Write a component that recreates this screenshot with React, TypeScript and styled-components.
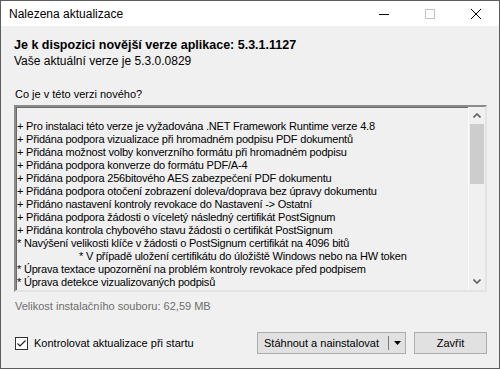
import React from "react";
import styled, { createGlobalStyle } from "styled-components";

const Global = createGlobalStyle`
  html, body {
    margin: 0;
    padding: 0;
    background: #f0f0f0;
  }
  * {
    box-sizing: border-box;
  }
`;

const Window = styled.div`
  width: 500px;
  height: 369px;
  border: 1px solid #5c5c5c;
  background: #f0f0f0;
  display: flex;
  flex-direction: column;
  font-family: "Liberation Sans", Arial, sans-serif;
  font-size: 11px;
  color: #000;
  overflow: hidden;
`;

const TitleBar = styled.div`
  height: 25px;
  background: #fff;
  display: flex;
  align-items: center;
  padding-left: 8px;
  flex-shrink: 0;
`;

const TitleText = styled.div`
  flex: 1;
  font-size: 12px;
  padding-top: 1px;
`;

const Controls = styled.div`
  display: flex;
  height: 100%;
`;

const ControlButton = styled.div`
  width: 46px;
  height: 100%;
  display: flex;
  align-items: center;
  justify-content: center;
`;

const Body = styled.div`
  flex: 1;
  display: flex;
  flex-direction: column;
  padding: 0 12px 0 13px;
`;

const Heading = styled.div`
  font-weight: bold;
  font-size: 12.5px;
  line-height: 15px;
  margin-top: 12px;
`;

const Current = styled.div`
  line-height: 15px;
  margin-top: 1px;
  font-size: 12px;
`;

const SectionLabel = styled.div`
  margin-top: 19px;
  line-height: 13px;
  padding-left: 1px;
`;

const TextBox = styled.div`
  margin-top: 4px;
  height: 187px;
  flex-shrink: 0;
  border-style: solid;
  border-width: 2px;
  border-color: #8a8a8a #e3e3e3 #e3e3e3 #8a8a8a;
  box-shadow: inset 1px 1px 0 #696969;
  display: flex;
  background: #f0f0f0;
`;

const Lines = styled.div`
  flex: 1;
  padding: 0 0 0 1px;
  line-height: 13px;
  letter-spacing: -0.2px;
  white-space: pre;
  overflow: hidden;
`;

const Line = styled.div<{ $indent?: number }>`
  height: 13px;
  padding-left: ${(p) => p.$indent || 0}px;
`;

const ScrollBar = styled.div`
  width: 17px;
  border-left: 1px solid #fbfbfb;
  display: flex;
  flex-direction: column;
  background: #f0f0f0;
`;

const Arrow = styled.div`
  height: 17px;
  display: flex;
  align-items: center;
  justify-content: center;
`;

const Track = styled.div`
  flex: 1;
  display: flex;
  flex-direction: column;
`;

const Thumb = styled.div`
  margin: 0 1px;
  height: 60px;
  background: #cdcdcd;
`;

const SizeInfo = styled.div`
  color: #6d6d6d;
  margin-top: 8px;
  line-height: 13px;
  padding-left: 1px;
`;

const Footer = styled.div`
  display: flex;
  align-items: center;
  margin-top: 19px;
`;

const CheckRow = styled.label`
  display: flex;
  align-items: center;
  gap: 6px;
  flex: 1;
  padding-left: 1px;
`;

const CheckBox = styled.span`
  width: 13px;
  height: 13px;
  border: 1px solid #333;
  background: #fff;
  display: flex;
  align-items: center;
  justify-content: center;
`;

const Button = styled.div<{ $width: number }>`
  width: ${(p) => p.$width}px;
  height: 22px;
  background: #e1e1e1;
  border: 1px solid #adadad;
  display: flex;
  align-items: center;
  justify-content: center;
`;

const SplitButton = styled(Button)`
  justify-content: flex-start;
  margin-right: 8px;
`;

const SplitLabel = styled.span`
  padding-left: 6px;
  width: 130px;
`;

const SplitDivider = styled.span`
  width: 1px;
  height: 14px;
  background: #7a7a7a;
`;

const SplitArrow = styled.span`
  flex: 1;
  display: flex;
  justify-content: center;
`;

const notes: { text: string; indent?: number }[] = [
  { text: "" },
  { text: "+ Pro instalaci této verze je vyžadována .NET Framework Runtime verze 4.8" },
  { text: "+ Přidána podpora vizualizace při hromadném podpisu PDF dokumentů" },
  { text: "+ Přidána možnost volby konverzního formátu při hromadném podpisu" },
  { text: "+ Přidána podpora konverze do formátu PDF/A-4" },
  { text: "+ Přidána podpora 256bitového AES zabezpečení PDF dokumentu" },
  { text: "+ Přidána podpora otočení zobrazení doleva/doprava bez úpravy dokumentu" },
  { text: "+ Přidáno nastavení kontroly revokace do Nastavení -> Ostatní" },
  { text: "+ Přidána podpora žádosti o víceletý následný certifikát PostSignum" },
  { text: "+ Přidána kontrola chybového stavu žádosti o certifikát PostSignum" },
  { text: "* Navýšení velikosti klíče v žádosti o PostSignum certifikát na 4096 bitů" },
  { text: "* V případě uložení certifikátu do úložiště Windows nebo na HW token", indent: 62 },
  { text: "* Úprava textace upozornění na problém kontroly revokace před podpisem" },
  { text: "* Úprava detekce vizualizovaných podpisů" },
];

export default function App() {
  return (
    <>
      <Global />
      <Window>
        <TitleBar>
          <TitleText>Nalezena aktualizace</TitleText>
          <Controls>
            <ControlButton>
              <svg width="10" height="10" viewBox="0 0 10 10">
                <path d="M0 5.5h10" stroke="#000" strokeWidth="1" />
              </svg>
            </ControlButton>
            <ControlButton>
              <svg width="10" height="10" viewBox="0 0 10 10">
                <rect x="0.5" y="0.5" width="9" height="9" fill="none" stroke="#c4c4c4" />
              </svg>
            </ControlButton>
            <ControlButton>
              <svg width="10" height="10" viewBox="0 0 10 10">
                <path d="M0 0L10 10M10 0L0 10" stroke="#000" strokeWidth="1" />
              </svg>
            </ControlButton>
          </Controls>
        </TitleBar>
        <Body>
          <Heading>Je k dispozici novější verze aplikace: 5.3.1.1127</Heading>
          <Current>Vaše aktuální verze je 5.3.0.0829</Current>
          <SectionLabel>Co je v této verzi nového?</SectionLabel>
          <TextBox>
            <Lines>
              {notes.map((n, i) => (
                <Line key={i} $indent={n.indent}>
                  {n.text}
                </Line>
              ))}
            </Lines>
            <ScrollBar>
              <Arrow>
                <svg width="8" height="5" viewBox="0 0 8 5">
                  <path d="M0.5 4.5L4 1L7.5 4.5" fill="none" stroke="#606060" strokeWidth="1.6" />
                </svg>
              </Arrow>
              <Track>
                <Thumb />
              </Track>
              <Arrow>
                <svg width="8" height="5" viewBox="0 0 8 5">
                  <path d="M0.5 0.5L4 4L7.5 0.5" fill="none" stroke="#606060" strokeWidth="1.6" />
                </svg>
              </Arrow>
            </ScrollBar>
          </TextBox>
          <SizeInfo>Velikost instalačního souboru: 62,59 MB</SizeInfo>
          <Footer>
            <CheckRow>
              <CheckBox>
                <svg width="11" height="11" viewBox="0 0 11 11">
                  <path d="M1.5 5.5L4 8L9.5 2.5" fill="none" stroke="#222" strokeWidth="1.2" />
                </svg>
              </CheckBox>
              Kontrolovat aktualizace při startu
            </CheckRow>
            <SplitButton $width={149}>
              <SplitLabel>Stáhnout a nainstalovat</SplitLabel>
              <SplitDivider />
              <SplitArrow>
                <svg width="7" height="4" viewBox="0 0 7 4">
                  <path d="M0 0h7L3.5 4z" fill="#000" />
                </svg>
              </SplitArrow>
            </SplitButton>
            <Button $width={73}>Zavřit</Button>
          </Footer>
        </Body>
      </Window>
    </>
  );
}
